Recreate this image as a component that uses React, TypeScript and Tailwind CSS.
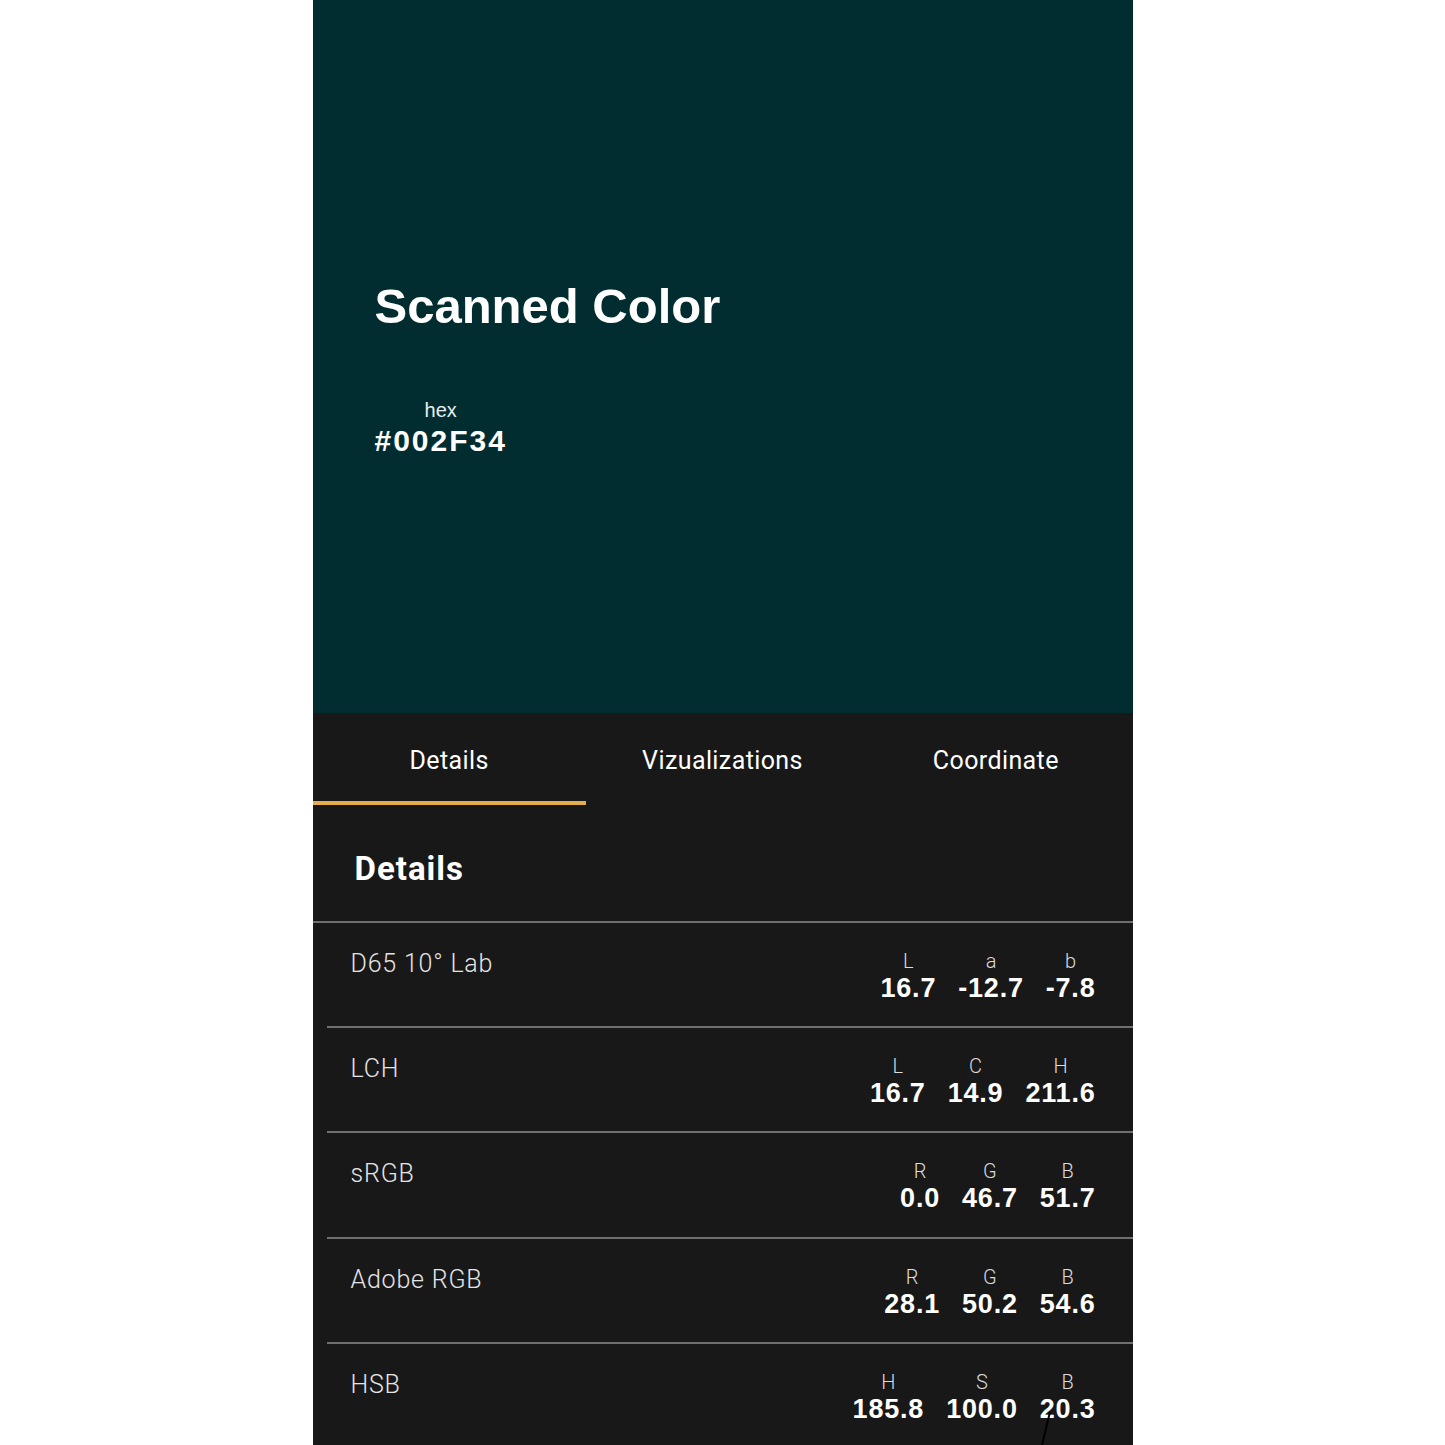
import React from "react";

type Row = { name: string; cols: [string, string][] };

const rows: Row[] = [
  { name: "D65 10° Lab", cols: [["L", "16.7"], ["a", "-12.7"], ["b", "-7.8"]] },
  { name: "LCH", cols: [["L", "16.7"], ["C", "14.9"], ["H", "211.6"]] },
  { name: "sRGB", cols: [["R", "0.0"], ["G", "46.7"], ["B", "51.7"]] },
  { name: "Adobe RGB", cols: [["R", "28.1"], ["G", "50.2"], ["B", "54.6"]] },
  { name: "HSB", cols: [["H", "185.8"], ["S", "100.0"], ["B", "20.3"]] },
];

export default function App() {
  return (
    <div className="w-full min-h-[1445px] bg-white flex justify-center">
      <div className="relative w-[820px] h-[1445px] overflow-hidden flex flex-col bg-[#181818]">
        {/* Color header */}
        <div className="h-[713px] bg-[#012d31] flex flex-col pl-[62px] pt-[276px] shrink-0">
          <div className="text-white font-bold text-[49px] leading-[60px] [font-family:'Liberation_Sans',Arial,sans-serif]">
            Scanned Color
          </div>
          <div className="mt-[62px] flex flex-col items-center self-start">
            <div className="text-[#e8eeee] text-[20px] leading-[24px] [font-family:'Liberation_Sans',Arial,sans-serif]">hex</div>
            <div className="text-white font-bold text-[30px] leading-[38px] tracking-[2px] [font-family:'Liberation_Sans',Arial,sans-serif]">#002F34</div>
          </div>
        </div>

        {/* Tabs */}
        <div className="grid grid-cols-3 h-[92px] shrink-0 [font-family:Roboto,sans-serif]">
          {["Details", "Vizualizations", "Coordinate"].map((t, i) => (
            <div key={t} className="relative flex items-center justify-center pt-[4px]">
              <span className="text-white text-[25px] tracking-[0.4px]">{t}</span>
              {i === 0 && <div className="absolute left-0 right-0 bottom-0 h-[4px] bg-[#e6ac4c]" />}
            </div>
          ))}
        </div>

        {/* Section heading */}
        <div className="h-[118px] shrink-0 flex items-center pl-[42px] pt-[12px] border-b-2 border-[#6f6f6f]">
          <span className="text-white font-bold text-[33px] tracking-[1px] [font-family:Roboto,sans-serif]">Details</span>
        </div>

        {/* Rows */}
        <div className="flex flex-col pl-[14px]">
          {rows.map((r) => (
            <div key={r.name} className="h-[105.2px] flex justify-between pl-[24px] pr-[37px] border-b-2 border-[#6f6f6f] pt-[26px]">
              <div className="text-[#e4e4e4] text-[25px] leading-[30px] tracking-[0.8px] [font-family:Roboto,sans-serif] font-light">{r.name}</div>
              <div className="flex gap-[22px]">
                {r.cols.map(([k, v]) => (
                  <div key={k + v} className="flex flex-col items-center">
                    <span className="text-[#dcdcdc] text-[20px] leading-[24px] [font-family:Roboto,sans-serif] font-light">{k}</span>
                    <span className="text-white font-bold text-[27px] leading-[30px] tracking-[0.8px] [font-family:'Liberation_Sans',Arial,sans-serif]">{v}</span>
                  </div>
                ))}
              </div>
            </div>
          ))}
        </div>

        {/* scratch line overlay */}
        <svg className="absolute left-[724px] top-[1412px]" width="20" height="33" viewBox="0 0 20 33">
          <path d="M13 0 L5 33" stroke="#000" strokeWidth="2" />
        </svg>
      </div>
    </div>
  );
}
